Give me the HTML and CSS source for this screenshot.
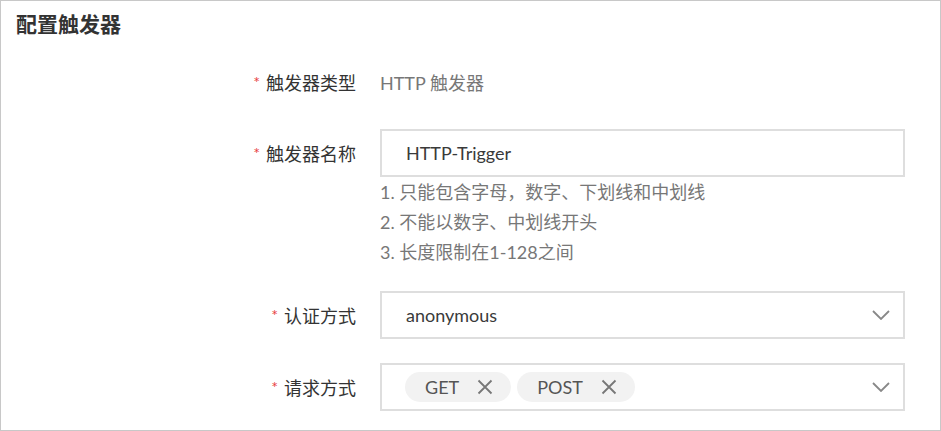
FILE: index.html
```html
<!DOCTYPE html>
<html lang="zh-CN">
<head>
    <meta charset="UTF-8">
    <meta name="viewport" content="width=device-width, initial-scale=1.0">
    <title>配置触发器</title>
    <link rel="stylesheet" href="styles.css">
</head>
<body>
    <div id="panel">
        <h2 class="title">配置触发器</h2>
        <div class="form">
            <div class="row row-static">
                <label class="label"><span class="req">*</span>触发器类型</label>
                <div class="value">HTTP 触发器</div>
            </div>

            <div class="row row-input">
                <label class="label"><span class="req">*</span>触发器名称</label>
                <div class="control">
                    <div class="box">HTTP-Trigger</div>
                </div>
            </div>
            <div class="row">
                <div></div>
                <ul class="hints">
                    <li>1. 只能包含字母，数字、下划线和中划线</li>
                    <li>2. 不能以数字、中划线开头</li>
                    <li>3. 长度限制在1-128之间</li>
                </ul>
            </div>

            <div class="row row-select">
                <label class="label"><span class="req">*</span>认证方式</label>
                <div class="control">
                    <div class="box select">
                        <span>anonymous</span>
                        <svg class="arrow" width="18" height="10" viewBox="0 0 18 10"><path d="M1 1l8 8 8-8" fill="none" stroke="#888" stroke-width="1.8"/></svg>
                    </div>
                </div>
            </div>

            <div class="row row-select">
                <label class="label"><span class="req">*</span>请求方式</label>
                <div class="control">
                    <div class="box select multi">
                        <div class="tags">
                            <span class="tag">GET
                                <svg width="16" height="16" viewBox="0 0 16 16"><path d="M1.5 1.5l13 13M14.5 1.5l-13 13" stroke="#777" stroke-width="1.8"/></svg>
                            </span>
                            <span class="tag">POST
                                <svg width="16" height="16" viewBox="0 0 16 16"><path d="M1.5 1.5l13 13M14.5 1.5l-13 13" stroke="#777" stroke-width="1.8"/></svg>
                            </span>
                        </div>
                        <svg class="arrow" width="18" height="10" viewBox="0 0 18 10"><path d="M1 1l8 8 8-8" fill="none" stroke="#888" stroke-width="1.8"/></svg>
                    </div>
                </div>
            </div>
        </div>
    </div>
</body>
</html>
```

FILE: styles.css
```css
*{
    margin: 0;
    padding: 0;
    box-sizing: border-box;
}
body{
    font-family: "Lato", "Noto Sans CJK SC", sans-serif;
    font-size: 18px;
    color: #333;
    background: #fff;
}
#panel{
    width: 941px;
    height: 431px;
    border: 1px solid #c8c8c8;
    padding: 10px 35px 0 15px;
}
.title{
    font-size: 21px;
    font-weight: bold;
    line-height: 26px;
    color: #333;
}
.form{
    display: flex;
    flex-direction: column;
    padding-top: 21px;
}
.row{
    display: grid;
    grid-template-columns: 340px 1fr;
    column-gap: 24px;
    align-items: center;
}
.row-static{
    height: 48px;
}
.row-input{
    margin-top: 23px;
}
.row-select{
    margin-top: 24px;
}
.label{
    text-align: right;
    color: #333;
}
.req{
    color: #e8423f;
    font-size: 16px;
    margin-right: 6px;
    position: relative;
    top: -2px;
}
.value{
    color: #777;
}
.box{
    height: 48px;
    border: 2px solid #dedede;
    padding: 0 24px;
    display: flex;
    align-items: center;
    color: #3a3a3a;
}
.select{
    justify-content: space-between;
    padding-right: 13px;
}
.multi{
    padding-left: 23px;
}
.hints{
    list-style: none;
    color: #777;
    line-height: 30px;
}
.tags{
    display: flex;
    gap: 6px;
}
.tag{
    display: flex;
    align-items: center;
    gap: 18px;
    height: 30px;
    padding: 0 18px 0 20px;
    border-radius: 15px;
    background: #f2f2f2;
    color: #555;
}
.arrow{
    display: block;
}
```
